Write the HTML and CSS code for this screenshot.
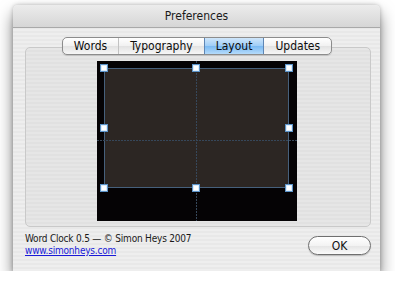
FILE: index.html
```html
<!DOCTYPE html>
<html lang="en">
<head>
    <meta charset="UTF-8">
    <title>Preferences</title>
    <link rel="stylesheet" href="styles.css">
</head>
<body>
    <div class="window">
        <div class="titlebar">Preferences</div>
        <div class="content">
            <div class="group">
                <div class="tabs">
                    <span class="tab">Words</span>
                    <span class="tab">Typography</span>
                    <span class="tab active">Layout</span>
                    <span class="tab">Updates</span>
                </div>
                <div class="canvas">
                    <div class="selection">
                        <span class="handle h-tl"></span>
                        <span class="handle h-tm"></span>
                        <span class="handle h-tr"></span>
                        <span class="handle h-ml"></span>
                        <span class="handle h-mr"></span>
                        <span class="handle h-bl"></span>
                        <span class="handle h-bm"></span>
                        <span class="handle h-br"></span>
                    </div>
                    <div class="guide guide-v"></div>
                    <div class="guide guide-h"></div>
                </div>
            </div>
            <div class="footer">
                <div class="credits">
                    <div>Word Clock 0.5 — © Simon Heys 2007</div>
                    <a href="#">www.simonheys.com</a>
                </div>
                <button class="ok">OK</button>
            </div>
        </div>
    </div>
</body>
</html>
```

FILE: styles.css
```css
body {
    margin: 0;
    padding: 5px 0 0 13px;
    background: #ffffff;
    font-family: 'DejaVu Sans', Verdana, sans-serif;
    font-stretch: condensed;
    color: #111;
}
.window {
    width: 367px;
    height: 266px;
    border-radius: 5px 5px 0 0;
    background: repeating-linear-gradient(#eeeeee 0 2px, #e8e8e8 2px 4px);
    box-shadow: 0 9px 16px rgba(0,0,0,0.5), 0 0 4px rgba(0,0,0,0.25);
    display: flex;
    flex-direction: column;
}
.titlebar {
    height: 22px;
    line-height: 22px;
    text-align: center;
    font-size: 12px;
    color: #1a1a1a;
    border-radius: 5px 5px 0 0;
    background: linear-gradient(#ececec, #d6d6d6);
    border-bottom: 1px solid #a9a9a9;
}
.content {
    padding: 19px 9px 0 12px;
}
.group {
    height: 178px;
    border: 1px solid #c9c9c9;
    border-radius: 5px;
    background: repeating-linear-gradient(#e6e6e6 0 2px, #e1e1e1 2px 4px);
    display: flex;
    flex-direction: column;
    align-items: center;
}
.tabs {
    margin-top: -11px;
    margin-left: -2px;
    display: flex;
    height: 16px;
    border: 1px solid #8c8c8c;
    border-radius: 5px;
    background: linear-gradient(#ffffff, #f1f1f1 50%, #e2e2e2 51%, #f6f6f6);
    box-shadow: 0 1px 1px rgba(0,0,0,0.15);
    overflow: hidden;
    font-size: 12px;
    line-height: 16px;
    color: #0d0d0d;
}
.tab {
    padding: 0 11px;
    border-left: 1px solid #c2c2c2;
}
.tab:first-child {
    border-left: none;
}
.tab.active {
    background: linear-gradient(#cfe6fb, #9fcdf7 50%, #7ab9f2 51%, #b5dbfb);
    border-left-color: #5e86b5;
    border-right: 1px solid #5e86b5;
}
.tab.active + .tab {
    border-left: none;
}
.canvas {
    position: relative;
    margin-top: 6px;
    margin-left: -2px;
    width: 200px;
    height: 160px;
    background: #050305;
}
.selection {
    position: absolute;
    left: 7px;
    top: 7px;
    width: 183px;
    height: 118px;
    background: #2c2623;
    border: 1px solid #46607c;
}
.guide {
    position: absolute;
}
.guide-v {
    left: 99px;
    top: 0;
    width: 1px;
    height: 160px;
    background: repeating-linear-gradient(#36475a 0 2px, transparent 2px 3px);
}
.guide-h {
    left: 0;
    top: 79px;
    width: 200px;
    height: 1px;
    background: repeating-linear-gradient(90deg, #36475a 0 2px, transparent 2px 3px);
}
.handle {
    position: absolute;
    z-index: 1;
    width: 6px;
    height: 6px;
    background: #ffffff;
    border: 1px solid #5c93c8;
    box-shadow: inset 0 0 0 1px #dcecfa;
}
.h-tl { left: -5px; top: -5px; }
.h-tm { left: 87px; top: -5px; }
.h-tr { right: -5px; top: -5px; }
.h-ml { left: -5px; top: 55px; }
.h-mr { right: -5px; top: 55px; }
.h-bl { left: -5px; bottom: -5px; }
.h-bm { left: 87px; bottom: -5px; }
.h-br { right: -5px; bottom: -5px; }
.footer {
    display: flex;
    justify-content: space-between;
    align-items: flex-start;
    padding: 6px 0 0 0;
}
.credits {
    font-size: 10px;
    line-height: 12px;
    letter-spacing: -0.2px;
    color: #1a1a1a;
}
.credits a {
    color: #1a1ad8;
}
.ok {
    margin-top: 3px;
    width: 63px;
    height: 19px;
    border: 1px solid #6f6f6f;
    border-radius: 10px;
    background: linear-gradient(#ffffff, #f3f3f3 50%, #e4e4e4 51%, #fbfbfb);
    box-shadow: 0 1px 1px rgba(0,0,0,0.2);
    font-family: 'DejaVu Sans', Verdana, sans-serif;
    font-stretch: condensed;
    font-size: 12px;
    color: #111;
    padding: 0;
}
```
